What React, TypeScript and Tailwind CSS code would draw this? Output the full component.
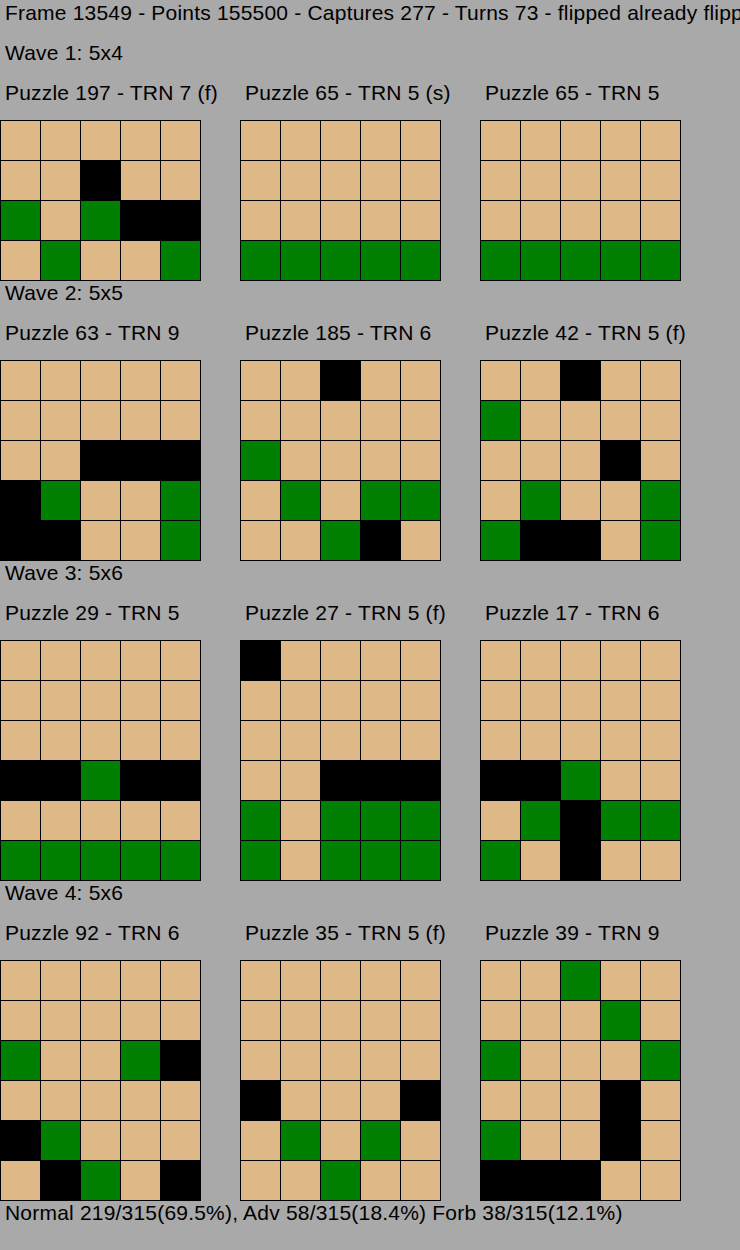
import React from 'react';

type Cell = 'T' | 'G' | 'B';

const cellColor: Record<Cell, string> = {
    T: 'bg-[#deb887]',
    G: 'bg-[#008000]',
    B: 'bg-black',
};

interface Puzzle {
    title: string;
    rows: string[];
}

interface Wave {
    title: string;
    puzzles: Puzzle[];
}

const waves: Wave[] = [
    {
        title: 'Wave 1: 5x4',
        puzzles: [
            { title: 'Puzzle 197 - TRN 7 (f)', rows: ['TTTTT', 'TTBTT', 'GTGBB', 'TGTTG'] },
            { title: 'Puzzle 65 - TRN 5 (s)', rows: ['TTTTT', 'TTTTT', 'TTTTT', 'GGGGG'] },
            { title: 'Puzzle 65 - TRN 5', rows: ['TTTTT', 'TTTTT', 'TTTTT', 'GGGGG'] },
        ],
    },
    {
        title: 'Wave 2: 5x5',
        puzzles: [
            { title: 'Puzzle 63 - TRN 9', rows: ['TTTTT', 'TTTTT', 'TTBBB', 'BGTTG', 'BBTTG'] },
            { title: 'Puzzle 185 - TRN 6', rows: ['TTBTT', 'TTTTT', 'GTTTT', 'TGTGG', 'TTGBT'] },
            { title: 'Puzzle 42 - TRN 5 (f)', rows: ['TTBTT', 'GTTTT', 'TTTBT', 'TGTTG', 'GBBTG'] },
        ],
    },
    {
        title: 'Wave 3: 5x6',
        puzzles: [
            { title: 'Puzzle 29 - TRN 5', rows: ['TTTTT', 'TTTTT', 'TTTTT', 'BBGBB', 'TTTTT', 'GGGGG'] },
            { title: 'Puzzle 27 - TRN 5 (f)', rows: ['BTTTT', 'TTTTT', 'TTTTT', 'TTBBB', 'GTGGG', 'GTGGG'] },
            { title: 'Puzzle 17 - TRN 6', rows: ['TTTTT', 'TTTTT', 'TTTTT', 'BBGTT', 'TGBGG', 'GTBTT'] },
        ],
    },
    {
        title: 'Wave 4: 5x6',
        puzzles: [
            { title: 'Puzzle 92 - TRN 6', rows: ['TTTTT', 'TTTTT', 'GTTGB', 'TTTTT', 'BGTTT', 'TBGTB'] },
            { title: 'Puzzle 35 - TRN 5 (f)', rows: ['TTTTT', 'TTTTT', 'TTTTT', 'BTTTB', 'TGTGT', 'TTGTT'] },
            { title: 'Puzzle 39 - TRN 9', rows: ['TTGTT', 'TTTGT', 'GTTTG', 'TTTBT', 'GTTBT', 'BBBTT'] },
        ],
    },
];

const Line: React.FC<{ children: React.ReactNode; className?: string }> = ({ children, className = '' }) => (
    <div className={`h-[40px] pl-[5px] text-[21px] leading-[26px] tracking-[0.2px] whitespace-nowrap ${className}`}>
        {children}
    </div>
);

const Board: React.FC<{ rows: string[] }> = ({ rows }) => (
    <div className="w-[201px] border-l border-t border-black -mb-px">
        {rows.map((row, r) => (
            <div key={r} className="flex">
                {row.split('').map((c, i) => (
                    <div key={i} className={`w-[40px] h-[40px] border-r border-b border-black ${cellColor[c as Cell]}`} />
                ))}
            </div>
        ))}
    </div>
);

export default function App() {
    return (
        <div
            className="min-h-screen w-full overflow-hidden bg-[#a9a9a9] text-black"
            style={{ fontFamily: '"Liberation Sans", Arial, sans-serif' }}
        >
            <Line>Frame 13549 - Points 155500 - Captures 277 - Turns 73 - flipped already flipped 0</Line>

            {waves.map((wave) => (
                <div key={wave.title}>
                    <Line>{wave.title}</Line>
                    <div className="flex">
                        {wave.puzzles.map((p, i) => (
                            <div key={i} className="w-[240px] shrink-0">
                                <Line>{p.title}</Line>
                                <Board rows={p.rows} />
                            </div>
                        ))}
                    </div>
                </div>
            ))}

            <Line>Normal 219/315(69.5%), Adv 58/315(18.4%) Forb 38/315(12.1%)</Line>
        </div>
    );
}
